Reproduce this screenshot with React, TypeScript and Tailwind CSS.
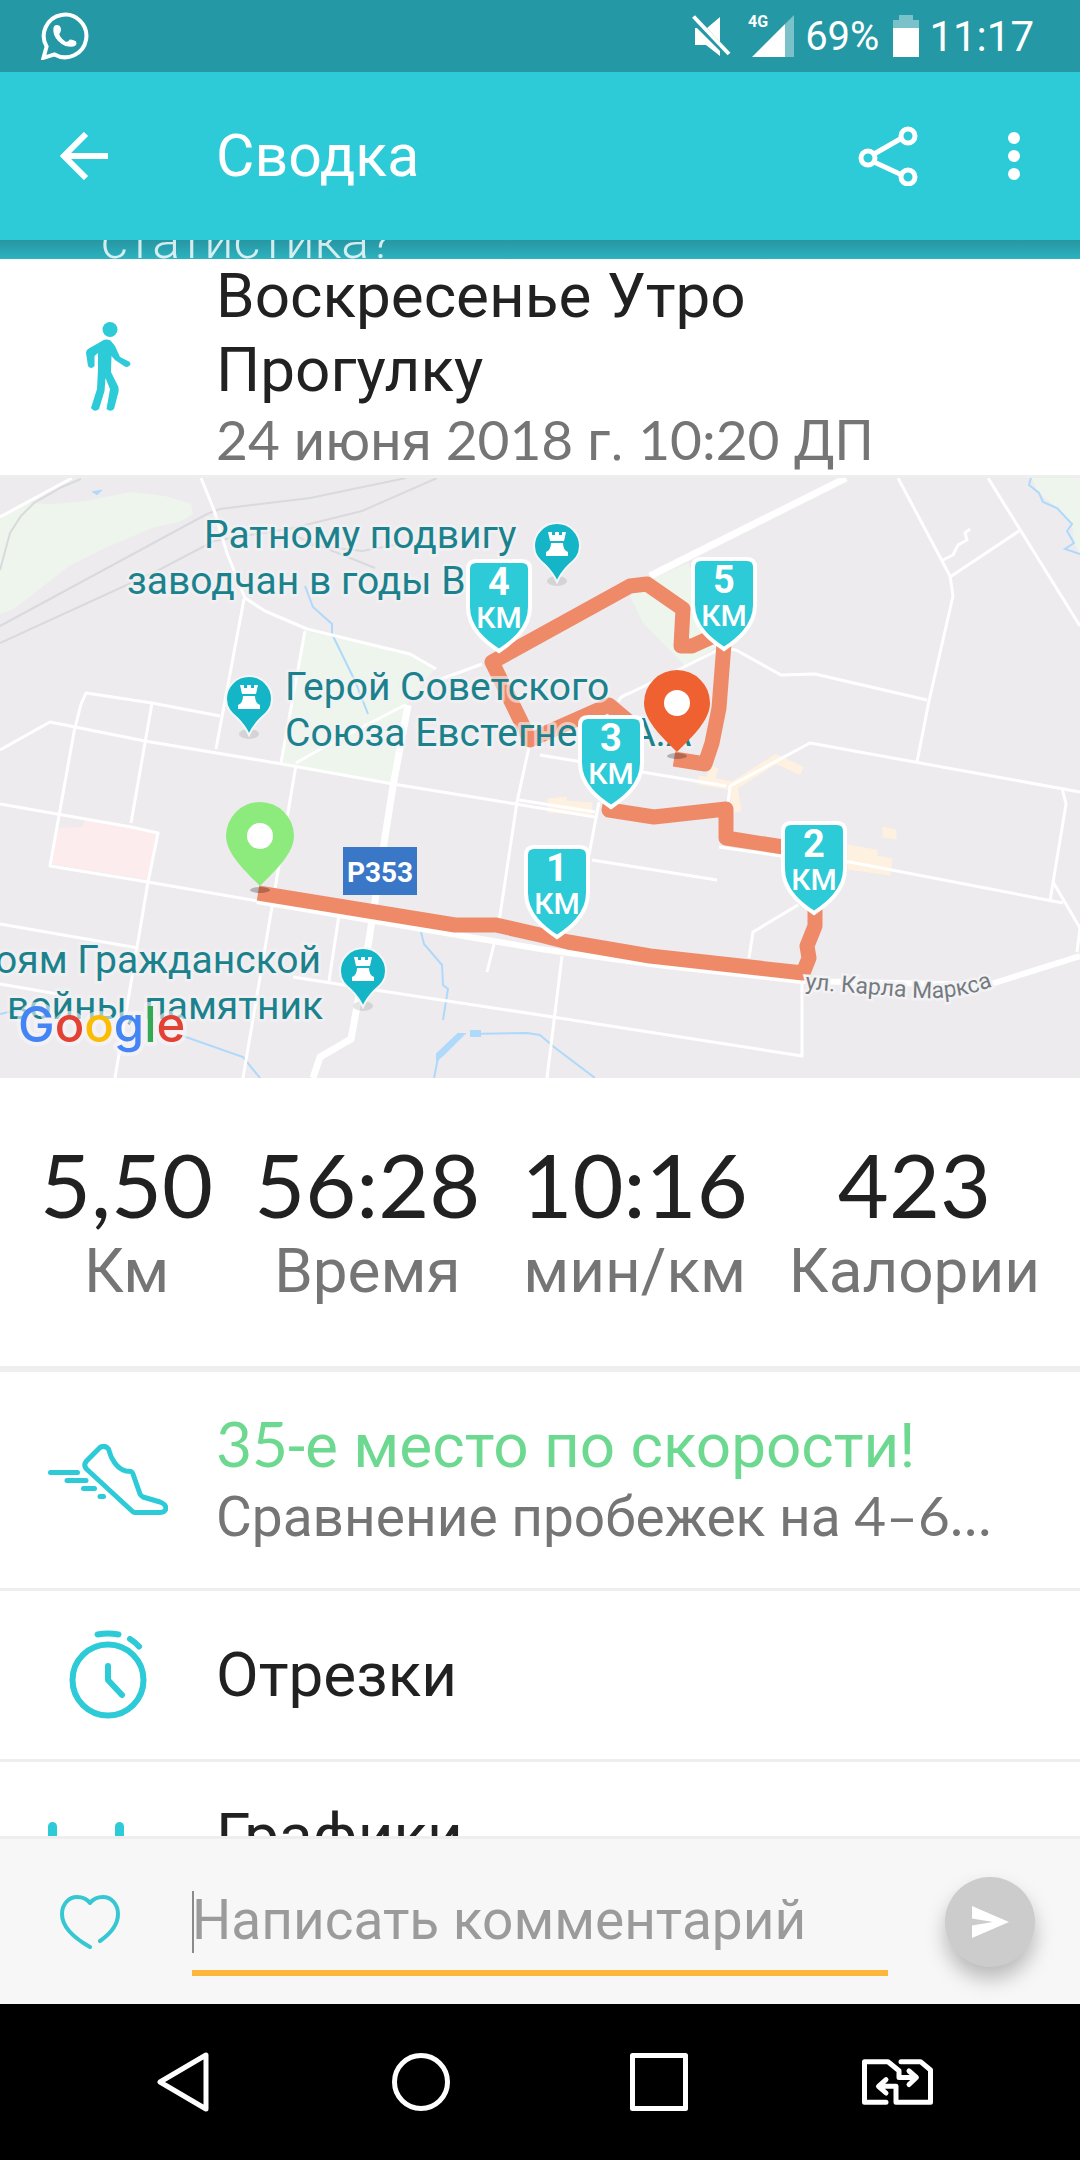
import { useState, type ReactNode } from 'react';

const STATS = [
  { value: '5,50', label: 'Км' },
  { value: '56:28', label: 'Время' },
  { value: '10:16', label: 'мин/км' },
  { value: '423', label: 'Калории' },
];

// route milestones, in map coordinates (top centre of each badge)
const MILESTONES = [
  { km: 4, x: 499, y: 85 },
  { km: 5, x: 724, y: 83 },
  { km: 3, x: 611, y: 241 },
  { km: 2, x: 814, y: 347 },
  { km: 1, x: 557, y: 371 },
];

const LANDMARKS = [
  { x: 557, y: 68 },
  { x: 249, y: 221 },
  { x: 363, y: 493 },
];

const LABELS = [
  { x: 204, y: 70, text: 'Ратному подвигу' },
  { x: 127, y: 116, text: 'заводчан в годы В' },
  { x: 285, y: 222, text: 'Герой Советского' },
  { x: 285, y: 268, text: 'Союза Евстегнеев А.А' },
  { x: -5, y: 495, text: 'оям Гражданской' },
  { x: 7, y: 541, text: 'войны, памятник' },
];

const MINOR_ROADS = [
  'M0 39 L72 0',
  'M201 0 L214 32 L227 75 L245 120 L265 133 L307 151 L410 176 L436 191',
  'M436 203 L482 186',
  'M244 121 L216 271',
  'M305 153 L281 285',
  'M296 285 L324 269 L405 227',
  'M220 238 L152 225 L86 215 L81 226 L74 254 L50 388 L148 404 L257 423',
  'M0 272 L50 244 L145 263 L282 286 L393 306 L540 330 L595 339',
  'M152 225 L131 345',
  'M0 326 L131 349 L158 355 L148 404 L115 600',
  'M296 287 L243 600',
  'M0 446 L138 470',
  'M0 506 L69 518',
  'M293 499 L382 513 L540 537 L802 578 L802 503',
  'M339 437 L329 503',
  'M494 466 L487 494',
  'M529 269 L517 324 L499 444',
  'M519 322 L595 334',
  'M619 224 Q618 219 630 215 L678 192 L722 170 L736 172 L781 197 L815 196 L927 222',
  'M898 0 L950 98 L953 118 L929 223 L917 284',
  'M988 0 L1080 148',
  'M950 99 L1019 53',
  'M941 83 L953 77 L958 67 L967 62 L965 55 L970 51',
  'M728 326 L730 308 L810 265 L1080 314',
  'M540 277 L726 308',
  'M1062 310 L1066 326 L1050 423',
  'M1053 404 L1080 450 L1077 474',
  'M719 369 L781 378 L850 384 L1063 425',
  'M592 382 L717 402',
  'M599 324 L588 382',
  'M798 427 L753 454 L749 480',
  'M562 478 L547 600',
];

const RAILS = [
  'M81 1 L62 9 L34 25 L21 38 L10 55 L0 92',
  'M0 148 L207 36 L220 31 L310 20 L406 0',
  'M0 165 L155 94 L214 63 L293 50 L362 33 L437 0',
  'M293 57 L375 90',
  'M310 67 L362 73 L400 66',
];

const RIVERS = [
  'M305 108 L313 129 L332 146 L332 156 L355 203 L368 236',
  'M421 454 L424 466 L442 487 L443 507 L448 511 L443 542',
  'M183 558 L243 579 L260 600',
  'M0 536 L22 531',
  'M434 600 L438 580 L461 556',
  'M470 556 L527 555 L540 557 L554 569 L595 600',
  'M1031 0 L1029 7 L1039 15 L1043 24 L1057 30 L1072 46 L1067 53 L1074 65 L1065 71 L1080 76',
];

const ROUTE =
  'M258 415 L455 447 L496 447 L540 457 L568 464 L650 478 L803 495 L809 480 L807 468 L815 448 L815 374 L726 360 L726 331 L654 339 L609 332 L628 243 L609 227 L530 262 L492 184 L630 108 L647 106 L683 131 L681 168 L692 168 L725 153 L719 230 L712 265 L705 286 L674 281';

function Num({ children }: { children: ReactNode }) {
  return <span className="font-['Lato',sans-serif] leading-none">{children}</span>;
}

function Pin({ x, y, r, fill }: { x: number; y: number; r: number; fill: string }) {
  return (
    <g transform={`translate(${x} ${y})`}>
      <ellipse cx="0" cy={r + 20} rx="10" ry="3" fill="#000" opacity="0.25" />
      <path
        d={`M${-r} 0 A${r} ${r} 0 0 1 ${r} 0 C${r} 17 16 ${r} 0 ${r + 16} C-16 ${r} ${-r} 17 ${-r} 0Z`}
        fill={fill}
      />
      <circle cx="0" cy="0" r="13" fill="#fff" />
    </g>
  );
}

function Landmark({ x, y }: { x: number; y: number }) {
  return (
    <g transform={`translate(${x} ${y})`}>
      <ellipse cx="0" cy="35" rx="10" ry="5" fill="#000" opacity="0.1" />
      <path
        d="M-23 0 A23 23 0 0 1 23 0 C23 9 18 14 12 19 Q4 27 0 36 Q-4 27 -12 19 C-18 14 -23 9 -23 0Z"
        fill="#13b5c7"
        stroke="#f4f6f8"
        strokeWidth="2"
      />
      <path d="M-9 -14 H-5 V-11 H-2 V-14 H2 V-11 H5 V-14 H9 L7 -5 H-7Z M-6 -3 H6 Q6 4 11 6 V10 H-11 V6 Q-6 4 -6 -3Z" fill="#fff" />
    </g>
  );
}

function Milestone({ km, x, y }: { km: number; x: number; y: number }) {
  return (
    <g transform={`translate(${x} ${y})`} fill="#fff" textAnchor="middle" className="font-[Roboto,sans-serif]">
      <path
        d="M-23 -2 H23 Q31 -2 31 6 V44 C31 66 12 80 0 88 C-12 80 -31 66 -31 44 V6 Q-31 -2 -23 -2Z"
        fill="#2dcad7"
        stroke="#fff"
        strokeWidth="4"
      />
      <text x="0" y="32" className="text-[38px] font-bold">{km}</text>
      <text x="0" y="65" className="text-[30px] font-medium">КМ</text>
    </g>
  );
}

function RouteMap() {
  return (
    <svg viewBox="0 0 1080 600" className="block h-auto w-full" role="img" aria-label="Маршрут">
      <rect width="1080" height="600" fill="#edebee" />
      <g fill="#edf5ed">
        <path d="M0 38 L22 25 L52 26 L86 23 L131 14 L165 18 L191 26 L193 36 L179 44 L152 50 L103 71 L69 88 L41 110 L14 131 L0 136Z" />
        <path d="M305 153 L410 176 L434 192 L406 227 L391 306 L296 289 L281 285Z" />
        <path d="M688 85 L654 100 L630 118 L643 145 L685 188 L719 168 L700 110Z" />
        <path d="M1031 0 L1039 15 L1057 30 L1072 46 L1074 65 L1080 76 V0Z" />
      </g>
      <path d="M58 350 L83 349 L84 342 L157 355 L147 402 L51 386Z" fill="#fceced" />
      <g fill="#fef1e0" stroke="#fef1e0">
        <path d="M548 321 L566 319 L566 323 L592 325 L592 338 L548 334Z" />
        <path d="M848 367 L877 372 V378 L892 381 L890 397 L848 391Z" />
        <path d="M883 349 L896 352 V361 L883 359Z" />
        <path d="M698 302 L733 308 L776 281 L802 293 M714 289 L710 304 M733 308 L737 334" fill="none" strokeWidth="9" />
      </g>
      <g fill="none" stroke="#d9dadd" strokeWidth="2">
        {RAILS.map((d) => <path key={d} d={d} />)}
      </g>
      <g fill="none" stroke="#afd9fb" strokeWidth="2">
        {RIVERS.map((d) => <path key={d} d={d} />)}
        <path d="M437 576 L458 556 L464 556 L444 576 L437 582Z M471 553 H480 V558 H471Z M94 14 L100 13 L97 16Z" fill="#afd9fb" />
      </g>
      <g fill="none" stroke="#fff" strokeWidth="3" strokeLinejoin="round">
        {MINOR_ROADS.map((d) => <path key={d} d={d} />)}
        <path d="M408 227 L393 308 L368 468 L351 561 L320 579 L313 600" strokeWidth="7" />
        <path d="M846 0 L650 98" strokeWidth="7" />
        <path d="M257 423 L540 471 L657 487 L802 503 L988 507 L1080 478" strokeWidth="6" />
      </g>
      <path d={ROUTE} fill="none" stroke="#ef8a69" strokeWidth="15" strokeLinejoin="round" />
      <g
        className="font-[Roboto,sans-serif] text-[39px]"
        fill="#1b828d"
        stroke="#f3f2f4"
        strokeOpacity="0.6"
        strokeWidth="6"
        strokeLinejoin="round"
        paintOrder="stroke"
      >
        {LABELS.map((l) => <text key={l.text} x={l.x} y={l.y}>{l.text}</text>)}
      </g>
      <path id="street" d="M805 511 L905 519 Q955 524 996 507" fill="none" />
      <text className="font-[Roboto,sans-serif] text-[23px]" fill="#757a7f" stroke="#f3f2f4" strokeWidth="5" paintOrder="stroke">
        <textPath href="#street">ул. Карла Маркса</textPath>
      </text>
      <rect x="343" y="369" width="74" height="48" fill="#3a77c6" />
      <text x="380" y="404" textAnchor="middle" fill="#fff" className="font-[Roboto,sans-serif] text-[28px] font-bold">Р353</text>
      {LANDMARKS.map((l) => <Landmark key={l.x} {...l} />)}
      <Pin x={260} y={358} r={34} fill="#8deb7d" />
      <Pin x={677} y={225} r={33} fill="#ef6130" />
      {MILESTONES.map((m) => <Milestone key={m.km} {...m} />)}
      <text
        x="18"
        y="564"
        className="font-[Inter,sans-serif] text-[49px] font-medium"
        stroke="#f6f5f7"
        strokeOpacity="0.6"
        strokeWidth="8"
        strokeLinejoin="round"
        paintOrder="stroke"
      >
        <tspan fill="#4385f5">G</tspan>
        <tspan fill="#e34133">o</tspan>
        <tspan fill="#fbbc05">o</tspan>
        <tspan fill="#4385f5">g</tspan>
        <tspan fill="#34a853">l</tspan>
        <tspan fill="#e34133">e</tspan>
      </text>
    </svg>
  );
}

function StatusBar() {
  return (
    <div className="flex h-[72px] shrink-0 items-center bg-[#2498a5] pr-[46px] pl-[41px] text-white">
      <svg width="48" height="48" viewBox="0 0 48 48">
        <path d="M5.6 34.5 A21.3 21.3 0 1 1 13.5 42.4 L2.5 45.8Z" fill="none" stroke="#fff" strokeWidth="4" />
        <path d="M12.4 16.3 Q13 13 15.8 13 Q19 12.8 19.6 15.5 Q20.8 18.7 18.2 22.3 Q19.5 26 24.4 29.4 Q27 30.5 28.5 27.8 Q29.9 26.6 35 29.3 Q36.2 32 34.5 33.6 Q31.3 35.8 24.4 34 Q15.8 30 13 22.5 Q12 19 12.4 16.3Z" fill="#fff" />
      </svg>
      <div className="ml-auto flex items-center">
        <svg width="40" height="42" viewBox="0 0 40 42" fill="#fff">
          <path d="M28 2 V27 L15 13Z M3 13 H5 L28 36 V41 L14 30 H3Z" />
          <path d="M1.5 1.5 L37 39" stroke="#fff" strokeWidth="4" />
        </svg>
        <span className="ml-4 self-start text-base leading-4 font-bold">4G</span>
        <svg width="43" height="42" viewBox="0 0 43 42" className="-ml-4" fill="#fff">
          <path d="M42 0 V42 H33 V9Z" opacity="0.4" />
          <path d="M0 42 L33 9 V42Z" />
        </svg>
        <span className="ml-2.5 pt-0.5 text-[40px] leading-[42px]">69%</span>
        <svg width="26" height="42" viewBox="0 0 26 42" className="ml-3.5" fill="#fff">
          <path d="M6 0 H20 V5 H26 V13 H0 V5 H6Z" opacity="0.4" />
          <rect y="13" width="26" height="29" />
        </svg>
        <span className="ml-2.5 pt-0.5 text-[42px] leading-[42px]">11:17</span>
      </div>
    </div>
  );
}

function AppBar() {
  return (
    <header className="flex h-[168px] shrink-0 items-center bg-[#2dcad7] text-white">
      <button type="button" aria-label="Назад" className="flex w-[168px] justify-center">
        <svg width="48" height="48" viewBox="0 0 48 48" fill="none" stroke="#fff" strokeWidth="6">
          <path d="M48 24 H5 M26 2 L4 24 L26 46" />
        </svg>
      </button>
      <h1 className="ml-12 text-[59px] leading-[74px]">Сводка</h1>
      <button type="button" aria-label="Поделиться" className="mr-[66px] ml-auto">
        <svg width="60" height="60" viewBox="0 0 60 60" fill="none" stroke="#fff" strokeWidth="5">
          <path d="M16 28 L44 12 M16 36 L44 49" />
          <circle cx="10" cy="32" r="7" />
          <circle cx="50" cy="10" r="7" />
          <circle cx="50" cy="51" r="7" />
        </svg>
      </button>
      <button type="button" aria-label="Меню" className="mr-[36px] flex w-[60px] justify-center">
        <svg width="12" height="48" viewBox="0 0 12 48" fill="#fff">
          <circle cx="6" cy="6" r="6" />
          <circle cx="6" cy="24" r="6" />
          <circle cx="6" cy="42" r="6" />
        </svg>
      </button>
    </header>
  );
}

function IconCell({ children }: { children: ReactNode }) {
  return <div className="flex w-[216px] shrink-0 justify-center">{children}</div>;
}

function CommentBar() {
  const [comment, setComment] = useState('');
  return (
    <form className="flex h-[168px] shrink-0 items-center overflow-hidden border-t-[3px] border-[#eeeeee] bg-[#f7f7f7] pr-[45px] pl-[60px]">
      <button type="button" aria-label="Нравится" className="mr-[72px]">
        <svg width="60" height="54" viewBox="0 0 60 54" fill="none" stroke="#36c7d3" strokeWidth="4" strokeLinecap="round" strokeLinejoin="round">
          <path d="M30 52 C14 43 2 32 2 19 C2 9 9 2 17 2 C22 2 27 4 30 8 C33 4 38 2 43 2 C51 2 58 9 58 19 C58 30 50 39 40 46" />
        </svg>
      </button>
      <div className="relative flex-1 border-b-[6px] border-[#fdb73b]">
        <input
          type="text"
          aria-label="Написать комментарий"
          placeholder="Написать комментарий"
          value={comment}
          onChange={(e) => setComment(e.target.value)}
          className="block h-[103px] w-full bg-transparent pt-0.5 text-[55px] outline-none placeholder:text-[#9b9b9b]"
        />
        <span className="absolute top-6 left-0 h-[62px] w-0.5 bg-[#8a8a8a]" />
      </div>
      <button
        type="submit"
        aria-label="Отправить"
        className="ml-[57px] flex size-[90px] items-center justify-center rounded-full bg-[#cccccc] shadow-[0_12px_20px_rgba(0,0,0,0.25)]"
      >
        <svg width="37" height="32" viewBox="0 0 37 32" fill="#fff">
          <path d="M0 0 L37 16 L0 32 V19.5 L21 16 L0 12.5Z" />
        </svg>
      </button>
    </form>
  );
}

function NavBar() {
  return (
    <nav className="flex h-[156px] shrink-0 items-center bg-black px-16">
      <button type="button" aria-label="Назад" className="flex flex-1 justify-center">
        <svg width="52" height="60" viewBox="0 0 52 60" fill="none" stroke="#fff" strokeWidth="5" strokeLinejoin="round">
          <path d="M49 3 V57 L3 30Z" />
        </svg>
      </button>
      <button type="button" aria-label="Домой" className="flex flex-1 justify-center">
        <svg width="58" height="58" viewBox="0 0 58 58" fill="none" stroke="#fff" strokeWidth="5">
          <circle cx="29" cy="29" r="26.5" />
        </svg>
      </button>
      <button type="button" aria-label="Недавние" className="flex flex-1 justify-center">
        <svg width="58" height="58" viewBox="0 0 58 58" fill="none" stroke="#fff" strokeWidth="5" strokeLinejoin="round">
          <rect x="2.5" y="2.5" width="53" height="53" />
        </svg>
      </button>
      <button type="button" aria-label="Сменить SIM" className="flex flex-1 justify-center">
        <svg width="71" height="46" viewBox="0 0 71 46" fill="none" stroke="#fff" strokeWidth="5" strokeLinecap="round" strokeLinejoin="round">
          <path d="M24 43.3 H2.5 V2.7 H26 L37 11.7 V18.5 H54 M47 12 L54.4 18.5 L47 25.5" />
          <path d="M39 2.7 H58.5 L68.5 11 V43.3 H34 V27.3 H17 M24 20.7 L16.5 27.3 L24 34" />
        </svg>
      </button>
    </nav>
  );
}

export default function App() {
  return (
    <div className="flex h-screen flex-col bg-white font-[Roboto,sans-serif] text-[#212121]">
      <StatusBar />
      <AppBar />

      <main className="min-h-0 flex-1 overflow-hidden">
        {/* tail of the promo banner scrolled under the app bar */}
        <div className="flex h-[19px] items-end overflow-hidden bg-linear-to-b from-[#2796a2] to-[#2cb3c0] pl-[101px]">
          <p className="text-[52px] leading-9 font-light text-white/80">статистика?</p>
        </div>

        <section className="flex items-center">
          <IconCell>
            <svg width="46" height="90" viewBox="0 0 46 90" fill="#2dcad7">
              <circle cx="25" cy="7.5" r="7.5" />
              <path d="M17 19 Q21 16.5 25.5 18.5 L30 24 L35 35 L44 39.5 Q47 42 44 44 Q42 46 39 44 L30 38 L26.5 34 L26 50 L33 64 Q34 66 33.5 70 L29 87 Q25.5 90.5 21.5 87 L25 67 L20.5 56 L19.5 69 L14 87 Q9.5 91 6 86 L12 67 L13 47 L13 31 L9.5 34 L9.5 44 Q6 48 3 44 L1 31 Q1 28.5 3 27Z" />
            </svg>
          </IconCell>
          <div className="flex-1 pr-24">
            <h2 className="text-[62px] leading-[74px]">Воскресенье Утро Прогулку</h2>
            <p className="text-[55px] leading-[68px] text-[#757575]">
              <Num>24</Num> июня <Num>2018</Num> г. <Num>10:20</Num> ДП
            </p>
          </div>
        </section>

        <div className="border-t-[3px] border-[#eeeeee]">
          <RouteMap />
        </div>

        <section className="flex justify-between px-10 pt-14 pb-[58px]">
          {STATS.map((s) => (
            <div key={s.label} className="flex flex-col items-center">
              <span className="font-['Lato',sans-serif] text-[88px] leading-[100px]">{s.value}</span>
              <span className="text-[62px] leading-[74px] text-[#757575]">{s.label}</span>
            </div>
          ))}
        </section>

        <a href="#rank" className="flex items-center border-t-[6px] border-[#eeeeee] py-[37px]">
          <IconCell>
            <svg width="120" height="72" viewBox="0 0 120 72" fill="none" stroke="#2dcad7" strokeWidth="5" strokeLinecap="round" strokeLinejoin="round">
              <path d="M52 3.5 Q57 0.5 60.5 5 C63 15 69 25 78 27 L83 27.5 Q84.5 28 85 30 L92 50 Q93 52 95 53 L112 58 C120 61 119.5 68.5 112 68.5 H87 Q85.5 68.5 84 67 L38.5 25 Q35 21 38.5 17Z" />
              <path d="M2.5 28.5 H29.5 M19 36.5 H38 M35.5 44.5 H46.5 M52 52.5 H55.5" />
            </svg>
          </IconCell>
          <div className="min-w-0 flex-1 pr-12">
            <h3 className="text-[62px] leading-[74px] text-[#6dd990]">
              <Num>35</Num>-е место по скорости!
            </h3>
            <p className="truncate text-[55px] leading-[68px] text-[#757575]">
              Сравнение пробежек на <Num>4–6…</Num>
            </p>
          </div>
        </a>

        <a href="#splits" className="flex h-[171px] items-center border-t-[3px] border-[#eeeeee]">
          <IconCell>
            <svg width="78" height="90" viewBox="0 0 78 90" fill="none" stroke="#2dcad7" strokeWidth="6" strokeLinecap="round" strokeLinejoin="round">
              <circle cx="39" cy="50" r="35.5" />
              <path d="M39 36 V50 L53 65 M28.5 4.5 Q39 2.5 49.5 4.5 M61 9 Q66 12 70 16.5" />
            </svg>
          </IconCell>
          <h3 className="text-[62px] leading-[74px]">Отрезки</h3>
        </a>

        <a href="#charts" className="flex h-[151px] items-center border-t-[3px] border-[#eeeeee]">
          <IconCell>
            <svg width="120" height="28" viewBox="0 0 120 28" fill="none" stroke="#2dcad7" strokeWidth="9" strokeLinecap="round">
              <path d="M4.5 4.5 V24 M71.5 4.5 V24" />
            </svg>
          </IconCell>
          <h3 className="text-[62px] leading-[74px]">Графики</h3>
        </a>
      </main>

      <CommentBar />
      <NavBar />
    </div>
  );
}
